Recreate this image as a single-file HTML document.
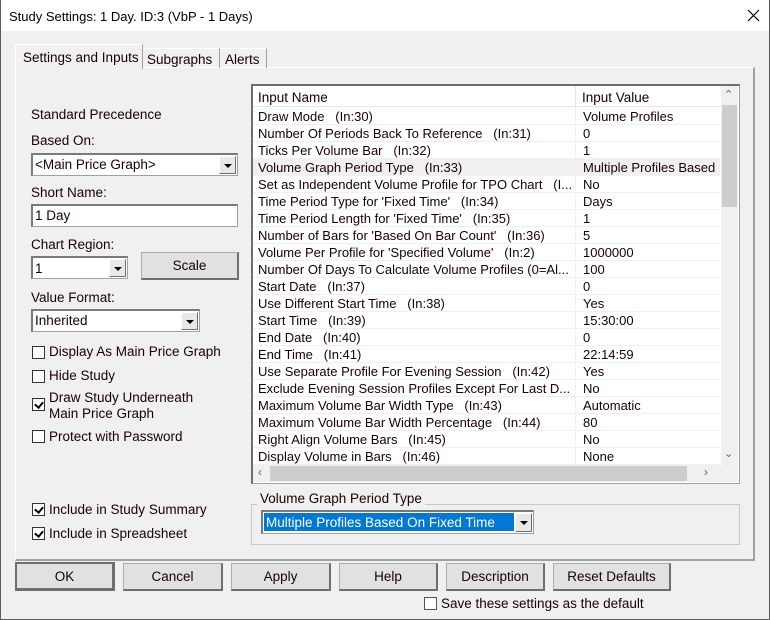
<!DOCTYPE html>
<html><head><meta charset="utf-8"><style>
*{box-sizing:border-box;margin:0;padding:0}
body{width:770px;height:620px;overflow:hidden;background:#f0f0f0;font-family:"Liberation Sans",sans-serif;font-size:13px;color:#1a0000;position:relative}
.a{position:absolute;white-space:nowrap}
.win{position:absolute;left:0;top:0;width:770px;height:620px;border:1px solid #5a5a5a;border-top:none}
.title{position:absolute;left:0;top:0;width:770px;height:31px;background:#fff}
.btn{position:absolute;background:#e1e1e1;border:1px solid #adadad;border-right:2px solid #6e6e6e;border-bottom:2px solid #6e6e6e;text-align:center;line-height:26px;font-size:13.5px}
.field{position:absolute;background:#fff;border:1px solid #a0a0a0;border-top:2px solid #7a7a7a;border-left:2px solid #7a7a7a;padding-left:2px;line-height:20px;font-size:13.5px}
.dd{position:absolute;right:1px;top:1px;width:17px;bottom:1px;background:#e8e8e8;border:1px solid #fff;border-right:1px solid #6e6e6e;border-bottom:1px solid #6e6e6e}
.dd:after{content:"";position:absolute;left:4px;top:7px;border-left:4px solid transparent;border-right:4px solid transparent;border-top:4px solid #000}
.cb{position:absolute;width:13px;height:13px;background:#fff;border:1px solid #333}
.cb.c:after{content:"";position:absolute;left:3px;top:1px;width:4px;height:6px;border-right:2px solid #000;border-bottom:2px solid #000;transform:rotate(40deg)}
.row{position:absolute;left:0;height:17px;width:467px;border-bottom:1px solid #f0f0f0;line-height:18px;font-size:13px}
.row span{position:absolute;left:5px}
.row b{font-weight:normal;position:absolute;left:330px}
.l{font-size:13.5px;margin-top:1px}
</style></head><body>
<div class="title"></div>
<div class="win"></div>
<div class="a" style="left:9px;top:9px;font-size:13px;color:#000">Study Settings: 1 Day. ID:3 (VbP - 1 Days)</div>
<svg class="a" style="left:747px;top:9px" width="13" height="13"><path d="M1 1L12 12M12 1L1 12" stroke="#000" stroke-width="1.2"/></svg>

<div class="a" style="left:15px;top:67px;width:740px;height:494px;border:1px solid #fff;border-right:2px solid #a0a0a0;border-bottom:2px solid #a0a0a0"></div>
<div class="a" style="left:15px;top:44px;width:128px;height:25px;background:#f0f0f0;border:1px solid #fff;border-right:1px solid #a0a0a0;border-bottom:none;padding:5px 0 0 7px;font-size:13.5px">Settings and Inputs</div>
<div class="a" style="left:143px;top:48px;width:77px;height:20px;border-top:1px solid #fff;border-right:1px solid #a0a0a0;padding:3px 0 0 4px;font-size:13.5px">Subgraphs</div>
<div class="a" style="left:220px;top:48px;width:47px;height:20px;border-top:1px solid #fff;border-right:1px solid #a0a0a0;padding:3px 0 0 5px;font-size:13.5px">Alerts</div>

<div class="a l" style="left:31px;top:106px">Standard Precedence</div>
<div class="a l" style="left:31px;top:132px">Based On:</div>
<div class="field" style="left:31px;top:153px;width:207px;height:23px">&lt;Main Price Graph&gt;<div class="dd"></div></div>
<div class="a l" style="left:31px;top:184px">Short Name:</div>
<div class="field" style="left:31px;top:204px;width:207px;height:23px">1 Day</div>
<div class="a l" style="left:31px;top:236px">Chart Region:</div>
<div class="field" style="left:31px;top:256px;width:97px;height:23px;line-height:21px">1<div class="dd"></div></div>
<div class="btn" style="left:141px;top:252px;width:98px;height:28px">Scale</div>
<div class="a l" style="left:31px;top:289px">Value Format:</div>
<div class="field" style="left:31px;top:309px;width:169px;height:23px">Inherited<div class="dd"></div></div>
<div class="cb" style="left:32px;top:346px"></div><div class="a l" style="left:49px;top:343px">Display As Main Price Graph</div>
<div class="cb" style="left:32px;top:370px"></div><div class="a l" style="left:49px;top:367px">Hide Study</div>
<div class="cb c" style="left:32px;top:398px"></div><div class="a l" style="left:49px;top:389px;line-height:16px">Draw Study Underneath<br>Main Price Graph</div>
<div class="cb" style="left:32px;top:430px"></div><div class="a l" style="left:49px;top:428px">Protect with Password</div>
<div class="cb c" style="left:32px;top:503px"></div><div class="a l" style="left:49px;top:501px">Include in Study Summary</div>
<div class="cb c" style="left:32px;top:527px"></div><div class="a l" style="left:49px;top:525px">Include in Spreadsheet</div>

<div class="a" style="left:251px;top:84px;width:489px;height:400px;border:1px solid #a0a0a0;border-top:2px solid #6e6e6e;border-left:2px solid #6e6e6e;background:#fff;overflow:hidden">
 <div class="a" style="left:0;top:0;width:468px;height:21px;background:#fff;border-bottom:1px solid #e5e5e5"></div>
 <div class="a" style="left:322px;top:0;width:1px;height:20px;background:#e5e5e5"></div>
 <div class="a" style="left:5px;top:4px;font-size:13.5px">Input Name</div>
 <div class="a" style="left:329px;top:4px;font-size:13.5px">Input Value</div>
 <div class="a" style="left:0;top:22px">
  <div class="row" style="top:0"><span>Draw Mode &nbsp; (In:30)</span><b>Volume Profiles</b></div>
  <div class="row" style="top:17px"><span>Number Of Periods Back To Reference &nbsp; (In:31)</span><b>0</b></div>
  <div class="row" style="top:34px"><span>Ticks Per Volume Bar &nbsp; (In:32)</span><b>1</b></div>
  <div class="row" style="top:51px;background:#f0f0f0"><span>Volume Graph Period Type &nbsp; (In:33)</span><b>Multiple Profiles Based</b></div>
  <div class="row" style="top:68px"><span>Set as Independent Volume Profile for TPO Chart &nbsp; (I...</span><b>No</b></div>
  <div class="row" style="top:85px"><span>Time Period Type for 'Fixed Time' &nbsp; (In:34)</span><b>Days</b></div>
  <div class="row" style="top:102px"><span>Time Period Length for 'Fixed Time' &nbsp; (In:35)</span><b>1</b></div>
  <div class="row" style="top:119px"><span>Number of Bars for 'Based On Bar Count' &nbsp; (In:36)</span><b>5</b></div>
  <div class="row" style="top:136px"><span>Volume Per Profile for 'Specified Volume' &nbsp; (In:2)</span><b>1000000</b></div>
  <div class="row" style="top:153px"><span>Number Of Days To Calculate Volume Profiles (0=Al...</span><b>100</b></div>
  <div class="row" style="top:170px"><span>Start Date &nbsp; (In:37)</span><b>0</b></div>
  <div class="row" style="top:187px"><span>Use Different Start Time &nbsp; (In:38)</span><b>Yes</b></div>
  <div class="row" style="top:204px"><span>Start Time &nbsp; (In:39)</span><b>15:30:00</b></div>
  <div class="row" style="top:221px"><span>End Date &nbsp; (In:40)</span><b>0</b></div>
  <div class="row" style="top:238px"><span>End Time &nbsp; (In:41)</span><b>22:14:59</b></div>
  <div class="row" style="top:255px"><span>Use Separate Profile For Evening Session &nbsp; (In:42)</span><b>Yes</b></div>
  <div class="row" style="top:272px"><span>Exclude Evening Session Profiles Except For Last D...</span><b>No</b></div>
  <div class="row" style="top:289px"><span>Maximum Volume Bar Width Type &nbsp; (In:43)</span><b>Automatic</b></div>
  <div class="row" style="top:306px"><span>Maximum Volume Bar Width Percentage &nbsp; (In:44)</span><b>80</b></div>
  <div class="row" style="top:323px"><span>Right Align Volume Bars &nbsp; (In:45)</span><b>No</b></div>
  <div class="row" style="top:340px"><span>Display Volume in Bars &nbsp; (In:46)</span><b>None</b></div>
 </div>
 <div class="a" style="left:322px;top:22px;width:1px;height:357px;background:#f0f0f0"></div>
 <div class="a" style="left:468px;top:0;width:17px;height:379px;background:#f0f0f0"></div>
 <div class="a" style="left:469px;top:19px;width:15px;height:102px;background:#cdcdcd"></div>
 <div class="a" style="left:471px;top:2px;font-size:11px;color:#606060">&#8963;</div>
 <div class="a" style="left:471px;top:361px;font-size:11px;color:#606060">&#8964;</div>
 <div class="a" style="left:0;top:379px;width:485px;height:17px;background:#f0f0f0"></div>
 <div class="a" style="left:17px;top:380px;width:417px;height:15px;background:#cdcdcd"></div>
 <div class="a" style="left:5px;top:379px;font-size:12px;color:#606060">&lsaquo;</div>
 <div class="a" style="left:451px;top:379px;font-size:12px;color:#606060">&rsaquo;</div>
</div>

<div class="a" style="left:251px;top:504px;width:489px;height:41px;border:1px solid #c8c8c8"></div>
<div class="a" style="left:257px;top:490px;background:#f0f0f0;padding:0 3px;font-size:13.5px;margin-top:1px">Volume Graph Period Type</div>
<div class="a" style="left:261px;top:510px;width:273px;height:24px;background:#fff;border:1px solid #a0a0a0;border-top:2px solid #7a7a7a;border-left:2px solid #7a7a7a">
 <div class="a" style="left:1px;top:1px;width:250px;height:18px;background:#0078d7;color:#fff;font-size:13.5px;line-height:19px;padding-left:2px;outline:1px dotted #fff">Multiple Profiles Based On Fixed Time</div>
 <div class="dd"></div>
</div>

<div class="btn" style="left:15px;top:562px;width:100px;height:29px;border:2px solid #6e6e6e;border-right:3px solid #6e6e6e;border-bottom:3px solid #6e6e6e;line-height:25px">OK</div>
<div class="btn" style="left:123px;top:563px;width:100px;height:28px">Cancel</div>
<div class="btn" style="left:231px;top:563px;width:100px;height:28px">Apply</div>
<div class="btn" style="left:339px;top:563px;width:99px;height:28px">Help</div>
<div class="btn" style="left:446px;top:563px;width:99px;height:28px">Description</div>
<div class="btn" style="left:553px;top:563px;width:118px;height:28px">Reset Defaults</div>
<div class="cb" style="left:424px;top:597px;border-color:#555"></div>
<div class="a l" style="left:441px;top:595px">Save these settings as the default</div>
</body></html>
